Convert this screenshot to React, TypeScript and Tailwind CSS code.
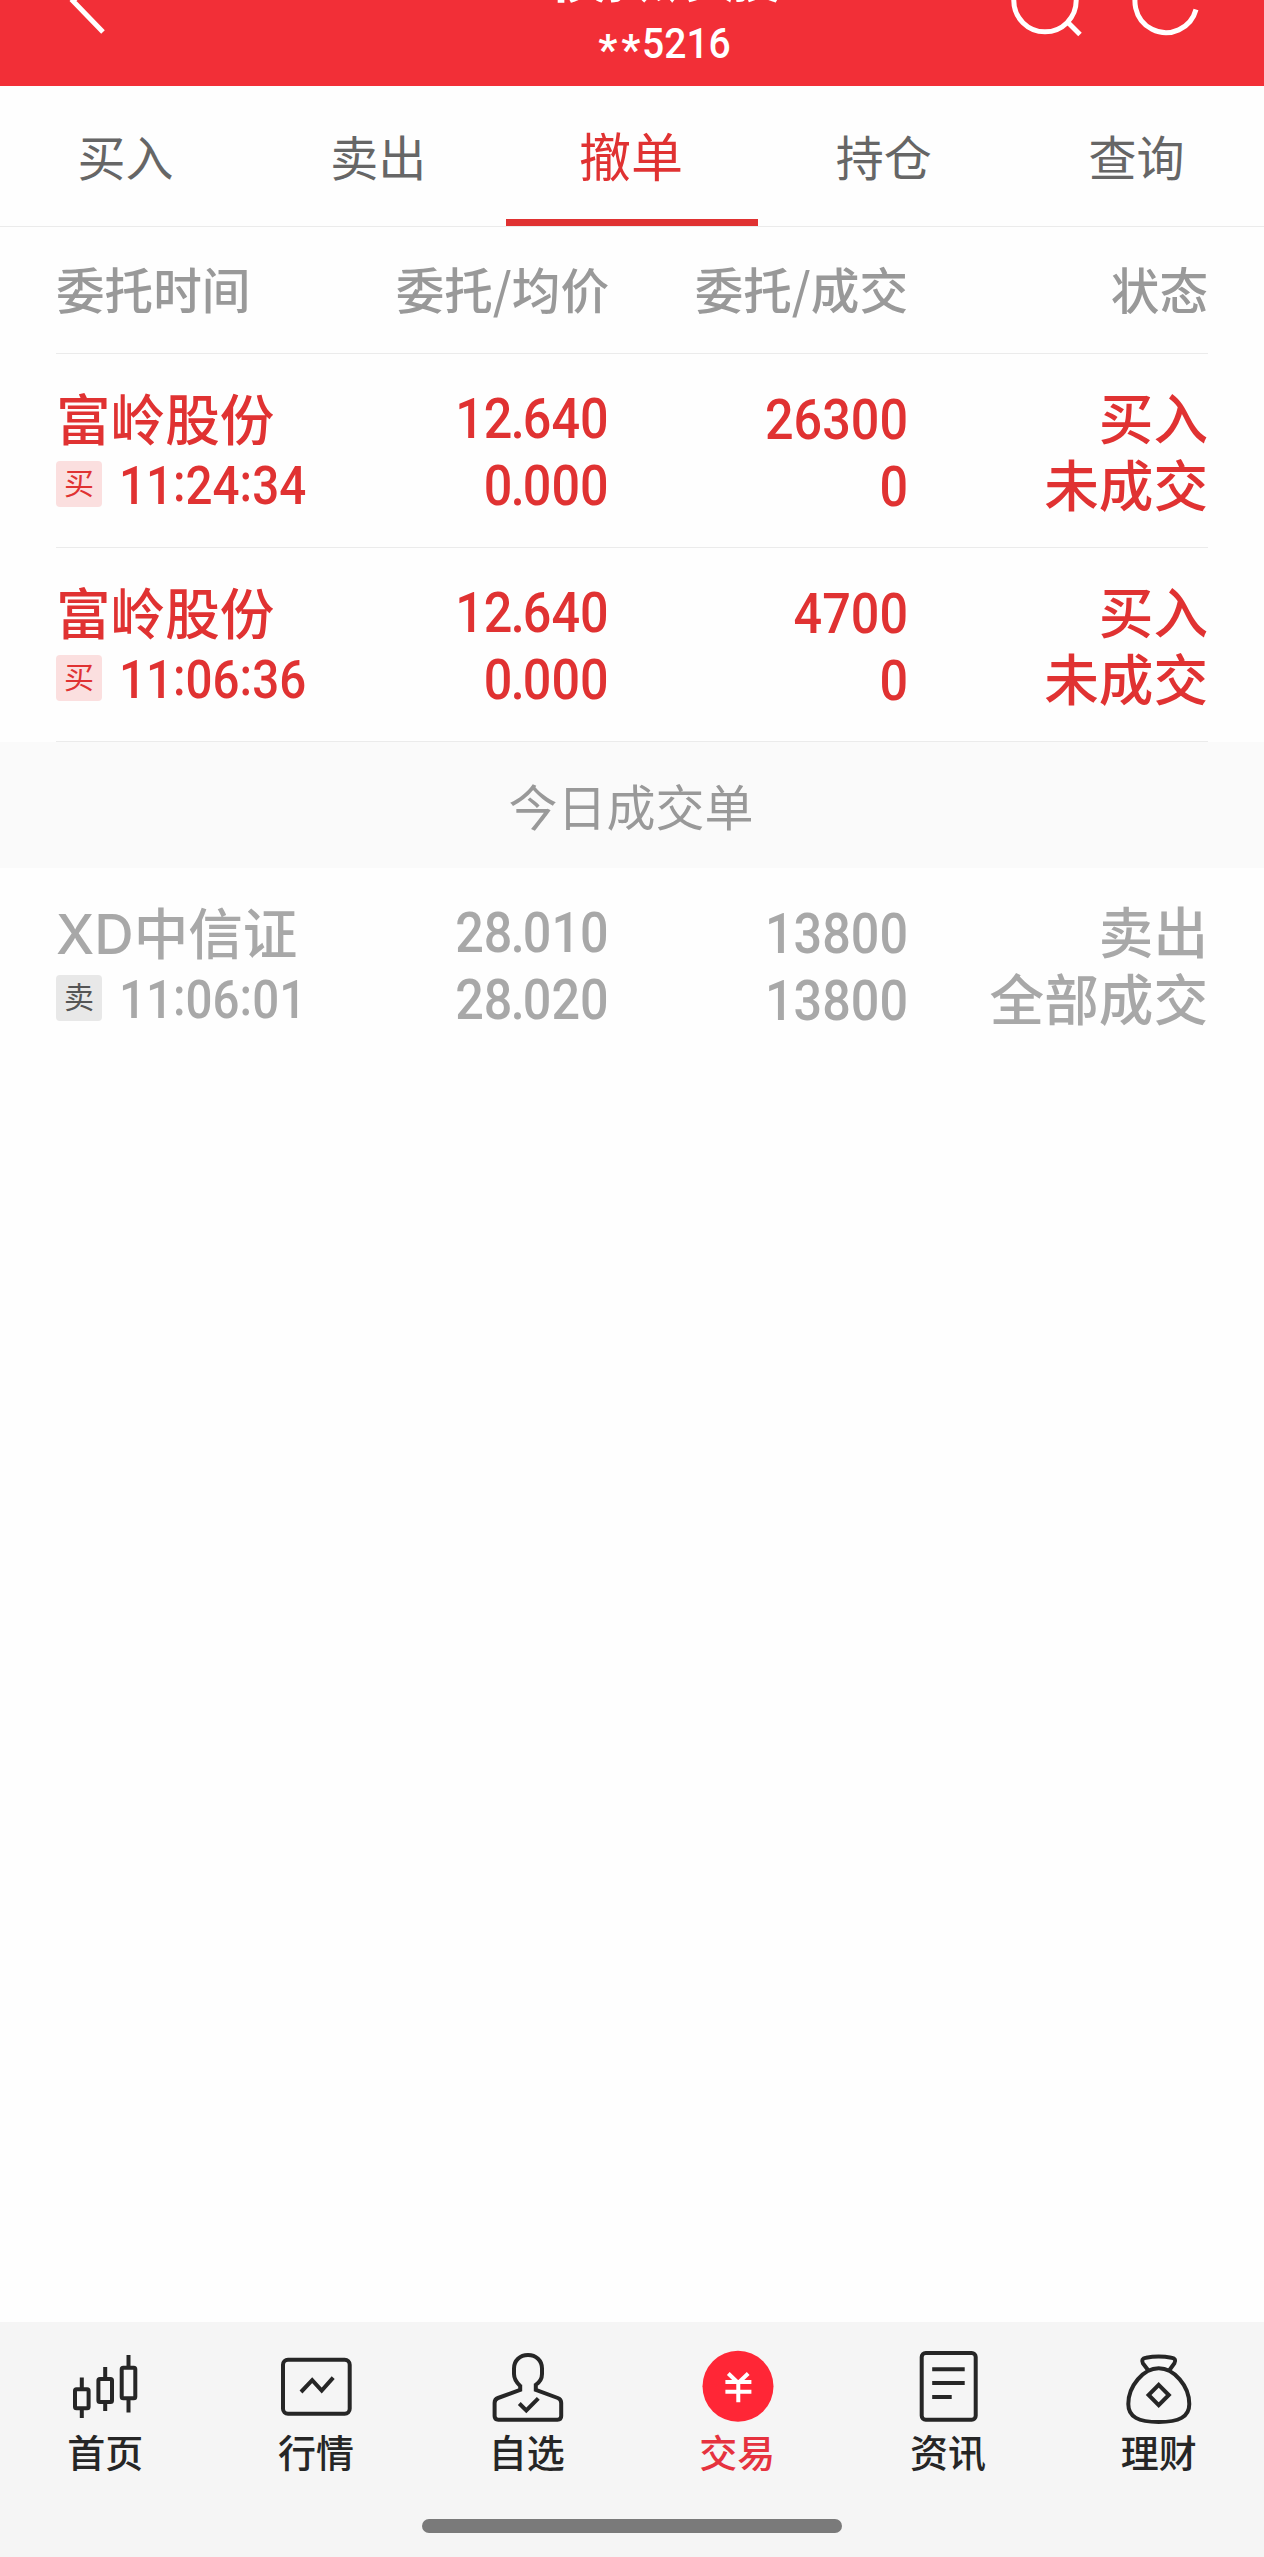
import type { ReactNode } from "react";

const tabs = ["买入", "卖出", "撤单", "持仓", "查询"];

type Order = {
  name: string;
  side: "买" | "卖";
  time: string;
  price: string;
  avg: string;
  qty: string;
  done: string;
  action: string;
  status: string;
};

const pending: Order[] = [
  { name: "富岭股份", side: "买", time: "11:24:34", price: "12.640", avg: "0.000", qty: "26300", done: "0", action: "买入", status: "未成交" },
  { name: "富岭股份", side: "买", time: "11:06:36", price: "12.640", avg: "0.000", qty: "4700", done: "0", action: "买入", status: "未成交" },
];

const filled: Order[] = [
  { name: "XD中信证", side: "卖", time: "11:06:01", price: "28.010", avg: "28.020", qty: "13800", done: "13800", action: "卖出", status: "全部成交" },
];

function Num({ children }: { children: string }) {
  const [whole, fraction] = children.split(".");
  return (
    <span className="block origin-right scale-x-[0.915] font-['Roboto'] text-[55px] font-medium">
      {whole}
      {fraction !== undefined && <span className="-mx-[2px]">.</span>}
      {fraction}
    </span>
  );
}

function Time({ value }: { value: string }) {
  const [h, m, s] = value.split(":");
  const colon = <span className="inline-block -translate-y-[3px]">:</span>;
  return (
    <span className="ml-[17px] block origin-left scale-x-[0.88] font-['Roboto'] text-[54px]">
      {h}
      {colon}
      {m}
      {colon}
      {s}
    </span>
  );
}

function OrderRow({ o, muted = false }: { o: Order; muted?: boolean }) {
  return (
    <div
      className={
        "mx-14 grid h-[194px] shrink-0 grid-cols-[553px_299px_300px] pt-[31px] text-[54.6px] leading-[67px] font-medium " +
        (muted ? "text-[#a8a8a8]" : "border-b border-[#ebebeb] text-[#e03232]")
      }
    >
      <div className="flex justify-between">
        <div>
          <div className="h-[67px] translate-y-[2px] font-['Inter','Noto_Sans_CJK_SC',sans-serif]">{o.name}</div>
          <div className="flex h-[67px] items-center">
            <span
              className={
                "mb-[4px] flex h-[46px] w-[46px] items-center justify-center rounded-[4px] pb-[5px] text-[30px] leading-none font-normal " +
                (muted ? "bg-[#e8e8e8] text-[#555]" : "bg-[#fbdfdf] text-[#e03232]")
              }
            >
              {o.side}
            </span>
            <Time value={o.time} />
          </div>
        </div>
        <div className="translate-y-[1px] text-right">
          <Num>{o.price}</Num>
          <Num>{o.avg}</Num>
        </div>
      </div>
      <div className="translate-y-[2px] text-right">
        <Num>{o.qty}</Num>
        <Num>{o.done}</Num>
      </div>
      <div className="-mt-[3px] text-right">
        <div>{o.action}</div>
        <div>{o.status}</div>
      </div>
    </div>
  );
}

function Icon({ children }: { children: ReactNode }) {
  return (
    <svg width="72" height="76" viewBox="0 0 72 76" fill="none" stroke="#262626" strokeWidth="4" className="overflow-visible">
      {children}
    </svg>
  );
}

const nav: { label: string; active?: boolean; icon: ReactNode }[] = [
  {
    label: "首页",
    icon: (
      <Icon>
        <rect x="6" y="39.3" width="13.6" height="19" rx="1.5" />
        <path d="M12.8 27.5V38M12.8 60V68" />
        <rect x="29.4" y="29" width="13.6" height="23" rx="1.5" />
        <path d="M36.2 17V28M36.2 53V61" />
        <rect x="52.7" y="17.7" width="13.6" height="30.5" rx="1.5" />
        <path d="M59.5 5V17M59.5 49V62.6" />
      </Icon>
    ),
  },
  {
    label: "行情",
    icon: (
      <Icon>
        <rect x="3" y="9.7" width="66.7" height="54" rx="5" />
        <path d="M21 42L32.2 30.2L41.7 40.5L53.2 27.6" />
      </Icon>
    ),
  },
  {
    label: "自选",
    icon: (
      <Icon>
        <path d="M29.2 34.8V39.8L7 48Q3.6 49.3 3.6 53V66Q3.6 69.7 7.3 69.7H66.5Q70.2 69.7 70.2 66V53Q70.2 49.3 66.8 48L44.8 39.8V34.8C49 32 51 29 51 24V18.5C51 10.5 45 5 37 5S23 10.5 23 18.5V24C23 29 25 32 29.2 36" />
        <path d="M28.3 53.5L35.3 60.5L47.3 48.3" />
      </Icon>
    ),
  },
  {
    label: "交易",
    active: true,
    icon: (
      <Icon>
        <circle cx="37" cy="36.3" r="35.5" fill="#ff2636" stroke="none" />
        <path d="M27.3 23.5L37.2 33L47.2 23.5M24.4 32H50.4M24.4 41.7H50.4M37.3 32V52.3" stroke="#fff" />
      </Icon>
    ),
  },
  {
    label: "资讯",
    icon: (
      <Icon>
        <rect x="9.7" y="3" width="54" height="66.7" rx="4" />
        <path d="M20.2 19.3H52.7M20.2 33H52.7M20.2 47H39.7" />
      </Icon>
    ),
  },
  {
    label: "理财",
    icon: (
      <Icon>
        <path d="M35.7 18.3C51 18.3 66.3 36 66.3 54C66.3 67 56 72 35.7 72S5.3 67 5.3 54C5.3 36 20.5 18.3 35.7 18.3Z" />
        <path d="M25 20L20 13.5Q17.5 8.5 23 7.7Q35.7 5.5 48.5 7.7Q54 8.5 51.3 13.5L46.5 20" />
        <path d="M35.7 34.8L45.8 45L35.7 55.2L25.6 45Z" />
      </Icon>
    ),
  },
];

export default function App() {
  return (
    <div className="flex h-[2557px] w-[1264px] flex-col overflow-hidden bg-[#fefefe] font-['Noto_Sans_CJK_SC',sans-serif]">
      <header className="relative h-[86px] shrink-0 overflow-hidden bg-[#f22f37] pl-[66px] text-white">
        <svg width="1264" height="86" viewBox="0 0 1264 86" fill="none" stroke="#fff" strokeWidth="5" className="absolute inset-0">
          <path d="M103 -30L73 1L103 32" />
          <circle cx="1045" cy="0.6" r="31.2" />
          <path d="M1067.5 22L1080 34.5" />
          <path d="M1196 9.5A31 31 0 1 1 1190 -18" />
        </svg>
        <div className="-mt-[61px] text-center text-[58px] leading-[66px] font-bold whitespace-nowrap">模拟炒股</div>
        <div className="mt-[17px] flex justify-center font-['Roboto'] text-[42px] leading-[44px] font-medium">
          <span className="translate-x-[2px] translate-y-[6px] font-bold tracking-[4px]">**</span>
          <span className="-mr-[4px] origin-left scale-x-[0.93]">5216</span>
        </div>
      </header>

      <nav className="grid h-[141px] shrink-0 grid-cols-5 border-b border-[#ebebeb] text-center text-[48px] text-[#666]">
        {tabs.map((t) => (
          <div
            key={t}
            className={
              t === "撤单"
                ? "h-[140px] border-b-[7px] border-[#e03232] pr-[2px] text-[52px] leading-[138px] text-[#e03232]"
                : "h-[140px] pr-[2px] leading-[139px]"
            }
          >
            {t}
          </div>
        ))}
      </nav>

      <div className="mx-14 grid h-[127px] shrink-0 grid-cols-[553px_299px_300px] border-b border-[#ebebeb] text-[48.6px] leading-[123px] font-medium text-[#999]">
        <div className="flex justify-between">
          <span>委托时间</span>
          <span>委托/均价</span>
        </div>
        <span className="text-right">委托/成交</span>
        <span className="text-right">状态</span>
      </div>

      {pending.map((o) => (
        <OrderRow key={o.time} o={o} />
      ))}
      <div className="h-[126px] shrink-0 bg-[#fafafa] pr-[2px] text-center text-[49px] leading-[125px] text-[#999]">今日成交单</div>
      {filled.map((o) => (
        <OrderRow key={o.time} o={o} muted />
      ))}

      <footer className="mt-auto h-[235px] shrink-0 bg-[#f5f5f5] pt-[28px]">
        <div className="grid grid-cols-6">
          {nav.map((n) => (
            <div key={n.label} className="flex flex-col items-center">
              {n.icon}
              <span className={"text-[38px] leading-[50px] font-medium " + (n.active ? "text-[#e6323e]" : "text-[#262626]")}>
                {n.label}
              </span>
            </div>
          ))}
        </div>
        <div className="mx-auto mt-[43px] h-[14px] w-[420px] rounded-full bg-[#7a7a7a]" />
      </footer>
    </div>
  );
}
